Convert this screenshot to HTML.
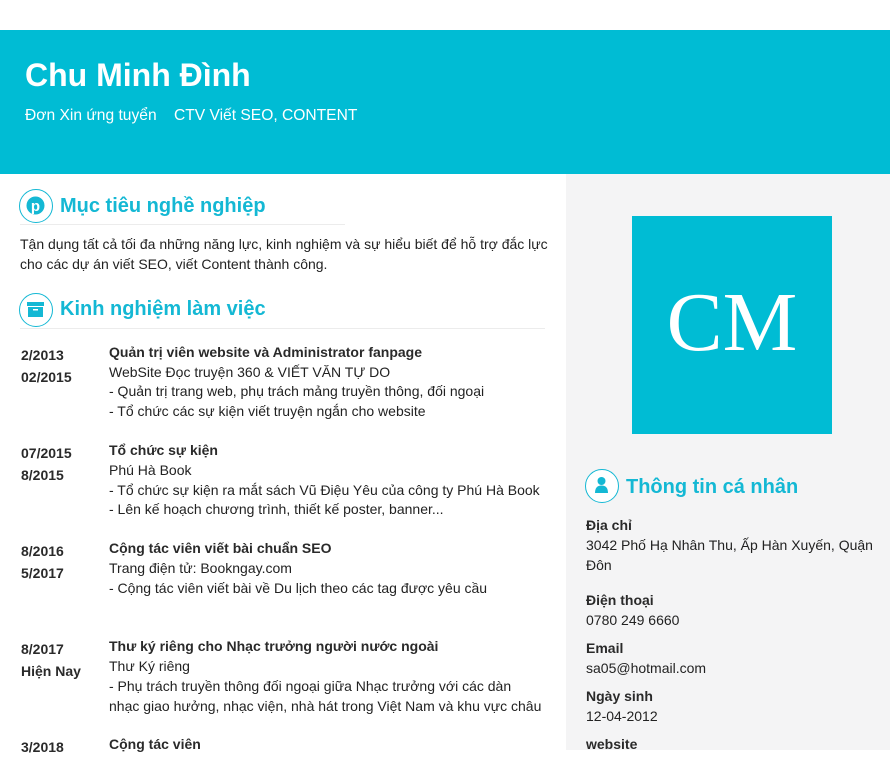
<!DOCTYPE html>
<html><head><meta charset="utf-8"><style>
*{margin:0;padding:0;box-sizing:border-box}
body{width:894px;height:750px;overflow:hidden;background:#fff;font-family:"Liberation Sans",Arial,sans-serif;color:#222;position:relative}
.a{position:absolute;white-space:nowrap}
.hdr{position:absolute;left:0;top:30px;width:890px;height:144px;background:#00bcd4}
.side{position:absolute;left:566px;top:174px;width:324px;height:576px;background:#f4f4f5}
.t{font-size:14px;line-height:20px;color:#222}
.b{font-weight:bold;color:#2a2a2a}
.h{font-size:20px;font-weight:bold;color:#14b8d4}
.ic{position:absolute;width:34px;height:34px;border:1.5px solid #14b8d4;border-radius:50%;background:#fff}
.ln{position:absolute;height:1px;background:#ececec}
</style></head><body>
<div class="hdr"></div>
<div class="a" style="left:25px;top:57px;font-size:32px;font-weight:bold;color:#fff">Chu Minh Đình</div>
<div class="a" style="left:25px;top:107px;font-size:15.6px;color:#fff">Đơn Xin ứng tuyển&nbsp;&nbsp;&nbsp; CTV Viết SEO, CONTENT</div>
<div class="side"></div>
<div class="a" style="left:632px;top:216px;width:200px;height:218px;background:#00bcd4"></div>
<div class="a" style="left:632px;top:278px;width:200px;text-align:center;font-family:'Liberation Serif',serif;font-size:84px;line-height:90px;color:#fff">CM</div>

<div class="ic" style="left:19px;top:189px"><svg width="31" height="31" viewBox="0 0 31 31"><circle cx="15.5" cy="15.5" r="9" fill="#14b8d4"/><text x="15.5" y="21" font-size="15" font-weight="bold" fill="#fff" text-anchor="middle" font-family="Liberation Sans">p</text></svg></div>
<div class="a h" style="left:60px;top:195px">Mục tiêu nghề nghiệp</div>
<div class="ln" style="left:20px;top:224px;width:325px"></div>
<div class="a t" style="left:20px;top:234px">Tận dụng tất cả tối đa những năng lực, kinh nghiệm và sự hiểu biết để hỗ trợ đắc lực</div>
<div class="a t" style="left:20px;top:254px">cho các dự án viết SEO, viết Content thành công.</div>

<div class="ic" style="left:19px;top:293px"><svg width="31" height="31" viewBox="0 0 31 31"><rect x="7" y="8" width="17" height="4" fill="#14b8d4"/><rect x="8" y="13" width="15" height="10" fill="#14b8d4"/><rect x="13" y="15" width="5" height="1.5" fill="#fff"/></svg></div>
<div class="a h" style="left:60px;top:298px">Kinh nghiệm làm việc</div>
<div class="ln" style="left:20px;top:328px;width:525px"></div>

<div class="a t b" style="left:21px;top:345px">2/2013</div>
<div class="a t b" style="left:21px;top:367px">02/2015</div>
<div class="a t b" style="left:109px;top:342px">Quản trị viên website và Administrator fanpage</div>
<div class="a t" style="left:109px;top:362px">WebSite Đọc truyện 360 &amp; VIẾT VĂN TỰ DO</div>
<div class="a t" style="left:109px;top:381px">- Quản trị trang web, phụ trách mảng truyền thông, đối ngoại</div>
<div class="a t" style="left:109px;top:401px">- Tổ chức các sự kiện viết truyện ngắn cho website</div>

<div class="a t b" style="left:21px;top:443px">07/2015</div>
<div class="a t b" style="left:21px;top:465px">8/2015</div>
<div class="a t b" style="left:109px;top:440px">Tổ chức sự kiện</div>
<div class="a t" style="left:109px;top:460px">Phú Hà Book</div>
<div class="a t" style="left:109px;top:480px">- Tổ chức sự kiện ra mắt sách Vũ Điệu Yêu của công ty Phú Hà Book</div>
<div class="a t" style="left:109px;top:499px">- Lên kế hoạch chương trình, thiết kế poster, banner...</div>

<div class="a t b" style="left:21px;top:541px">8/2016</div>
<div class="a t b" style="left:21px;top:563px">5/2017</div>
<div class="a t b" style="left:109px;top:538px">Cộng tác viên viết bài chuẩn SEO</div>
<div class="a t" style="left:109px;top:558px">Trang điện tử: Bookngay.com</div>
<div class="a t" style="left:109px;top:578px">- Cộng tác viên viết bài về Du lịch theo các tag được yêu cầu</div>

<div class="a t b" style="left:21px;top:639px">8/2017</div>
<div class="a t b" style="left:21px;top:661px">Hiện Nay</div>
<div class="a t b" style="left:109px;top:636px">Thư ký riêng cho Nhạc trưởng người nước ngoài</div>
<div class="a t" style="left:109px;top:656px">Thư Ký riêng</div>
<div class="a t" style="left:109px;top:676px">- Phụ trách truyền thông đối ngoại giữa Nhạc trưởng với các dàn</div>
<div class="a t" style="left:109px;top:696px">nhạc giao hưởng, nhạc viện, nhà hát trong Việt Nam và khu vực châu</div>

<div class="a t b" style="left:21px;top:737px">3/2018</div>
<div class="a t b" style="left:109px;top:734px">Cộng tác viên</div>

<div class="ic" style="left:585px;top:469px"><svg width="31" height="31" viewBox="0 0 31 31"><circle cx="15.5" cy="11" r="4" fill="#14b8d4"/><path d="M9 23 Q9 15.5 15.5 15.5 Q22 15.5 22 23 Z" fill="#14b8d4"/></svg></div>
<div class="a h" style="left:626px;top:476px">Thông tin cá nhân</div>
<div class="a t b" style="left:586px;top:515px">Địa chỉ</div>
<div class="a t" style="left:586px;top:535px">3042 Phố Hạ Nhân Thu, Ấp Hàn Xuyến, Quận</div>
<div class="a t" style="left:586px;top:555px">Đôn</div>
<div class="a t b" style="left:586px;top:590px">Điện thoại</div>
<div class="a t" style="left:586px;top:610px">0780 249 6660</div>
<div class="a t b" style="left:586px;top:638px">Email</div>
<div class="a t" style="left:586px;top:658px">sa05@hotmail.com</div>
<div class="a t b" style="left:586px;top:686px">Ngày sinh</div>
<div class="a t" style="left:586px;top:706px">12-04-2012</div>
<div class="a t b" style="left:586px;top:734px">website</div>
</body></html>
